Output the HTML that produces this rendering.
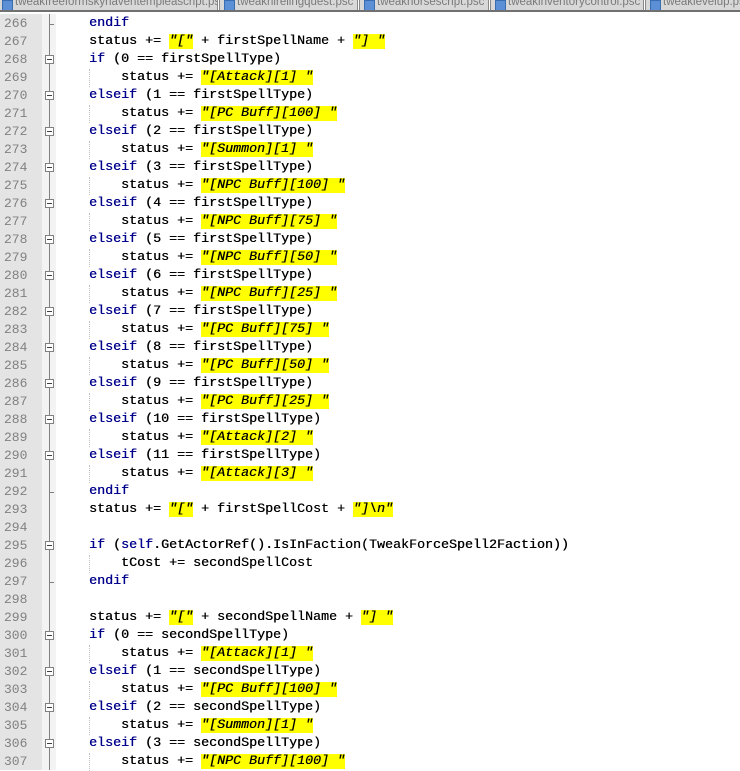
<!DOCTYPE html>
<html><head><meta charset="utf-8"><style>
*{margin:0;padding:0;box-sizing:border-box}
body{width:740px;height:770px;overflow:hidden;background:#fff;position:relative;font-family:"Liberation Mono",monospace}
#tabs{position:absolute;left:0;top:0;width:740px;height:12px;background:#d8d8d8;border-bottom:2px solid #707070;overflow:hidden}
.tab{position:absolute;top:-4px;height:16px;font:11.5px "Liberation Sans",sans-serif;color:#7a7a7a;white-space:nowrap;padding-left:15px;overflow:hidden}
.tab:before{content:"";position:absolute;left:2px;top:4px;width:9px;height:11px;background:#5b8fd6;border:1px solid #3a6cb0}
.sep{position:absolute;top:0;width:3px;height:12px;background:#fff;border-left:1px solid #888;border-right:1px solid #888;z-index:2}
#gut{position:absolute;left:0;top:14px;width:42px;height:756px;background:#e4e4e4}
#fold{position:absolute;left:42px;top:14px;width:14px;height:756px;background:#f3f3f3}
#vline{position:absolute;left:49px;top:14px;width:1px;height:756px;background:#808080}
#code{position:absolute;left:0;top:15px;width:740px}
.l{position:relative;height:18px;line-height:18px;font-size:13.33px;white-space:pre;color:#000}
.n{position:absolute;left:4px;top:0;color:#808080;font-size:13px}
.c{position:absolute;left:57px;top:0;text-shadow:0.35px 0 0 currentColor}
.k{color:#00008b}
.s{background:#ffff00;font-style:italic}
.b{position:absolute;left:45px;top:4px;width:9px;height:9px;border:1px solid #808080;background:#fff}
.b:after{content:"";position:absolute;left:1px;top:3px;width:5px;height:1px;background:#404040}
.t{position:absolute;left:49px;top:9px;width:5px;height:1px;background:#808080}
.g{position:absolute;left:89px;top:0;height:18px;border-left:1px dotted #c0c0c0}
</style></head><body>
<div id="tabs">
<div class="tab" style="left:0;width:217px">tweakfreeformskyhaventempleascript.psc</div>
<div class="sep" style="left:217px"></div>
<div class="tab" style="left:222px;width:135px">tweakhirelingquest.psc</div>
<div class="sep" style="left:357px"></div>
<div class="tab" style="left:362px;width:126px">tweakhorsescript.psc</div>
<div class="sep" style="left:488px"></div>
<div class="tab" style="left:493px;width:150px">tweakinventorycontrol.psc</div>
<div class="sep" style="left:643px"></div>
<div class="tab" style="left:648px;width:92px">tweaklevelup.psc</div>
</div>
<div id="gut"></div><div id="fold"></div><div id="vline"></div>
<div id="code">
<div class="l"><span class="n">266</span><i class="t"></i><span class="c">    <span class="k">endif</span></span></div>
<div class="l"><span class="n">267</span><span class="c">    status += <span class="s">"["</span> + firstSpellName + <span class="s">"] "</span></span></div>
<div class="l"><span class="n">268</span><i class="b"></i><span class="c">    <span class="k">if</span> (0 == firstSpellType)</span></div>
<div class="l"><span class="n">269</span><i class="g"></i><span class="c">        status += <span class="s">"[Attack][1] "</span></span></div>
<div class="l"><span class="n">270</span><i class="b"></i><span class="c">    <span class="k">elseif</span> (1 == firstSpellType)</span></div>
<div class="l"><span class="n">271</span><i class="g"></i><span class="c">        status += <span class="s">"[PC Buff][100] "</span></span></div>
<div class="l"><span class="n">272</span><i class="b"></i><span class="c">    <span class="k">elseif</span> (2 == firstSpellType)</span></div>
<div class="l"><span class="n">273</span><i class="g"></i><span class="c">        status += <span class="s">"[Summon][1] "</span></span></div>
<div class="l"><span class="n">274</span><i class="b"></i><span class="c">    <span class="k">elseif</span> (3 == firstSpellType)</span></div>
<div class="l"><span class="n">275</span><i class="g"></i><span class="c">        status += <span class="s">"[NPC Buff][100] "</span></span></div>
<div class="l"><span class="n">276</span><i class="b"></i><span class="c">    <span class="k">elseif</span> (4 == firstSpellType)</span></div>
<div class="l"><span class="n">277</span><i class="g"></i><span class="c">        status += <span class="s">"[NPC Buff][75] "</span></span></div>
<div class="l"><span class="n">278</span><i class="b"></i><span class="c">    <span class="k">elseif</span> (5 == firstSpellType)</span></div>
<div class="l"><span class="n">279</span><i class="g"></i><span class="c">        status += <span class="s">"[NPC Buff][50] "</span></span></div>
<div class="l"><span class="n">280</span><i class="b"></i><span class="c">    <span class="k">elseif</span> (6 == firstSpellType)</span></div>
<div class="l"><span class="n">281</span><i class="g"></i><span class="c">        status += <span class="s">"[NPC Buff][25] "</span></span></div>
<div class="l"><span class="n">282</span><i class="b"></i><span class="c">    <span class="k">elseif</span> (7 == firstSpellType)</span></div>
<div class="l"><span class="n">283</span><i class="g"></i><span class="c">        status += <span class="s">"[PC Buff][75] "</span></span></div>
<div class="l"><span class="n">284</span><i class="b"></i><span class="c">    <span class="k">elseif</span> (8 == firstSpellType)</span></div>
<div class="l"><span class="n">285</span><i class="g"></i><span class="c">        status += <span class="s">"[PC Buff][50] "</span></span></div>
<div class="l"><span class="n">286</span><i class="b"></i><span class="c">    <span class="k">elseif</span> (9 == firstSpellType)</span></div>
<div class="l"><span class="n">287</span><i class="g"></i><span class="c">        status += <span class="s">"[PC Buff][25] "</span></span></div>
<div class="l"><span class="n">288</span><i class="b"></i><span class="c">    <span class="k">elseif</span> (10 == firstSpellType)</span></div>
<div class="l"><span class="n">289</span><i class="g"></i><span class="c">        status += <span class="s">"[Attack][2] "</span></span></div>
<div class="l"><span class="n">290</span><i class="b"></i><span class="c">    <span class="k">elseif</span> (11 == firstSpellType)</span></div>
<div class="l"><span class="n">291</span><i class="g"></i><span class="c">        status += <span class="s">"[Attack][3] "</span></span></div>
<div class="l"><span class="n">292</span><i class="t"></i><span class="c">    <span class="k">endif</span></span></div>
<div class="l"><span class="n">293</span><span class="c">    status += <span class="s">"["</span> + firstSpellCost + <span class="s">"]\n"</span></span></div>
<div class="l"><span class="n">294</span><span class="c"></span></div>
<div class="l"><span class="n">295</span><i class="b"></i><span class="c">    <span class="k">if</span> (<span class="k">self</span>.GetActorRef().IsInFaction(TweakForceSpell2Faction))</span></div>
<div class="l"><span class="n">296</span><i class="g"></i><span class="c">        tCost += secondSpellCost</span></div>
<div class="l"><span class="n">297</span><i class="t"></i><span class="c">    <span class="k">endif</span></span></div>
<div class="l"><span class="n">298</span><span class="c"></span></div>
<div class="l"><span class="n">299</span><span class="c">    status += <span class="s">"["</span> + secondSpellName + <span class="s">"] "</span></span></div>
<div class="l"><span class="n">300</span><i class="b"></i><span class="c">    <span class="k">if</span> (0 == secondSpellType)</span></div>
<div class="l"><span class="n">301</span><i class="g"></i><span class="c">        status += <span class="s">"[Attack][1] "</span></span></div>
<div class="l"><span class="n">302</span><i class="b"></i><span class="c">    <span class="k">elseif</span> (1 == secondSpellType)</span></div>
<div class="l"><span class="n">303</span><i class="g"></i><span class="c">        status += <span class="s">"[PC Buff][100] "</span></span></div>
<div class="l"><span class="n">304</span><i class="b"></i><span class="c">    <span class="k">elseif</span> (2 == secondSpellType)</span></div>
<div class="l"><span class="n">305</span><i class="g"></i><span class="c">        status += <span class="s">"[Summon][1] "</span></span></div>
<div class="l"><span class="n">306</span><i class="b"></i><span class="c">    <span class="k">elseif</span> (3 == secondSpellType)</span></div>
<div class="l"><span class="n">307</span><i class="g"></i><span class="c">        status += <span class="s">"[NPC Buff][100] "</span></span></div>
</div>
</body></html>
